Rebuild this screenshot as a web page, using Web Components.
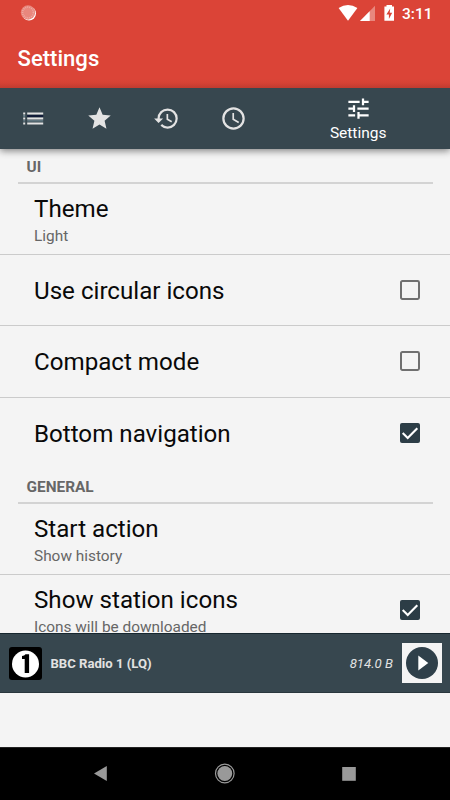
<!DOCTYPE html>
<html lang="en"><head><meta charset="utf-8"><title>Settings</title>
<style>html,body{margin:0;height:100%;background:#f4f4f4;font-family:Roboto,sans-serif}</style></head>
<body><radio-app></radio-app>
<script>
function define(name, markup, setup){
  const t=document.createElement('template');
  t.innerHTML=markup;
  customElements.define(name,class extends HTMLElement{
    constructor(){super();this.attachShadow({mode:'open'}).append(t.content.cloneNode(true));}
    connectedCallback(){if(setup)setup(this);}
  });
}
define('status-bar',`<style>:host{display:flex;height:27px;color:#fff;align-items:center;padding:0 17px 0 20px;box-sizing:border-box}
.sp{flex:1}svg{display:block;flex:none}span{font-size:15.5px;font-weight:500;line-height:27px;padding-top:1px;margin-left:8px;width:31px;white-space:nowrap}</style>
<svg width="17" height="27"><circle cx="9" cy="13.5" r="7" fill="#fff"/><circle cx="8" cy="12.5" r="7.2" fill="#e8877d"/><circle cx="8" cy="12.5" r="5.4" fill="none" stroke="#efaaa3" stroke-width="1.6" stroke-dasharray="1 1"/></svg>
<div class="sp"></div>
<svg width="57" height="27" viewBox="337 0 57 27"><path d="M338.6 8Q348 2 357.4 8L348 20.7Z" fill="#fff"/><path d="M375 5.8V21H360Z" fill="#e8877d"/><path d="M369.7 11.2V21H360Z" fill="#fff"/><path d="M386.5 5h5.5v1.6h2v14.2h-9.6V6.6h2.1Z" fill="#fff"/><path d="M390.2 8.5l-3.8 6h2.5v4.5l3.3-6.2h-2.5Z" fill="#db4437"/></svg><span>3:11</span>`);
define('app-header',`<style>:host{display:block;height:88px;background:linear-gradient(#db4437 79px,#d54235 83px,#bf3b30 88px)}
h1{margin:0;padding-left:17.5px;font:500 22.1px/62px Roboto,sans-serif;color:#fff}</style><status-bar></status-bar><h1><slot></slot></h1>`);
define('nav-tab',`<style>:host{display:flex;width:66.6px;flex-direction:column;align-items:center;justify-content:center;color:#fff;height:60px;box-sizing:border-box}
:host([active]){flex:1;width:auto;padding-top:2px}
::slotted(svg){display:block;width:27px;height:27px;fill:#e3e3e3}
:host([active]) ::slotted(svg){fill:#fff}
span{font-size:15.5px;line-height:20px;padding-top:1px}span:empty,:host(:not([active])) span{display:none}</style><slot></slot><span></span>`,
e=>e.shadowRoot.querySelector('span').textContent=e.getAttribute('label')||'');
define('nav-tabs',`<style>:host{display:flex;height:61px;background:#37474f;box-shadow:0 2px 7px #0007;position:relative;z-index:1;clip-path:inset(0 0 -14px 0)}</style><slot></slot>`);
define('pref-category',`<style>:host{display:block;height:35px;margin:0 17.5px;padding-left:9px;box-sizing:border-box;border-bottom:2px solid #d3d3d3;font-size:15.4px;font-weight:700;line-height:36px;color:#676767}</style><slot></slot>`);
define('check-box',`<style>:host{display:block;width:20px;height:20px}svg{display:block}.on{display:none}:host([checked]) .on{display:block}:host([checked]) .off{display:none}</style>
<svg class="off" width="20" height="20"><rect x="1" y="1" width="18" height="18" rx="1.4" fill="none" stroke="#707070" stroke-width="2"/></svg>
<svg class="on" width="20" height="20"><rect width="20" height="20" rx="2" fill="#2c3d46"/><path d="M2.7 10l5 5L17.3 5.2" fill="none" stroke="#fff" stroke-width="2.1"/></svg>`);
define('pref-row',`<style>:host{display:flex;height:71.2px;box-sizing:border-box;padding:0 29.6px 0 34px;align-items:center;justify-content:space-between;color:#090909}
:host([divider]){border-bottom:1px solid #cbcbcb}
:host(:not([divider])){padding-bottom:1px}
.text{padding-top:2px}
.t{font-size:24.15px;line-height:29px;white-space:nowrap;padding-top:1px}.s{font-size:15.4px;line-height:20px;padding-top:2px;color:#666;white-space:nowrap}</style>
<div class="text"><div class="t"><slot></slot></div><div class="s"><slot name="summary"></slot></div></div><slot name="control"></slot>`,
e=>{if(!e.querySelector('[slot=summary]'))e.shadowRoot.querySelector('.s').style.display='none'});
define('mini-player',`<style>:host{display:flex;height:60px;background:#37474f;box-sizing:border-box;border-top:1px solid #17272f;border-bottom:1px solid #29363d;align-items:center;padding:0 8.5px 0 9px;color:#e2e2e2}
svg{display:block;flex:none}.n{font-size:13.1px;font-weight:700;margin-left:8.5px;flex:1}.b{font-size:13.2px;font-style:italic;margin-right:8.5px}</style>
<svg width="33" height="33"><rect width="33" height="33" rx="3" fill="#000"/><circle cx="16.5" cy="17" r="13.5" fill="#fff"/><path d="M13 9q2.5 0 3.5-1.8h3.6V26H15.7V12H13Z" fill="#000"/></svg>
<div class="n">BBC Radio 1 (LQ)</div><div class="b">814.0 B</div>
<svg width="40" height="40"><rect width="40" height="40" fill="#f4f4f4"/><circle cx="20" cy="20" r="16" fill="#2f404a"/><path d="M16.3 12.6v14.8L26.3 20Z" fill="#fff"/></svg>`);
define('system-nav',`<style>:host{display:flex;height:53px;box-sizing:border-box;background:#000;border-top:1px solid #222}svg{display:block;width:450px}</style>
<svg viewBox="0 748 450 52" height="52"><g fill="#999"><path d="M94 773.5L106.8 766V781Z"/><circle cx="224.8" cy="773.5" r="7.4"/><circle cx="224.8" cy="773.5" r="9.3" fill="none" stroke="#999" stroke-width="1.2"/><rect x="342.2" y="767" width="13.6" height="13.8"/></g></svg>`);
define('radio-app',`<style>:host{display:flex;flex-direction:column;width:450px;height:800px;overflow:hidden;background:#f4f4f4}
app-header,nav-tabs,mini-player,system-nav{flex:none}main{height:484px;overflow:hidden;flex:none}.gap{flex:1}</style>
<app-header>Settings</app-header>
<nav-tabs>
<nav-tab><svg viewBox="0 0 27 27"><path d="M3.2 7.5h2v2h-2zM7.2 7.5h16v2h-16zM3.2 12.5h2v2h-2zM7.2 12.5h16v2h-16zM3.2 17.5h2v2h-2zM7.2 17.5h16v2h-16z"/><path fill="#101b38" d="M7.2 10h16v2h-16z"/><path fill="#6f8791" d="M3.2 10h2v1.8h-2zM3.2 15.2h2v1.4h-2zM7.2 15.2h16v1.4h-16z"/></svg></nav-tab>
<nav-tab><svg viewBox="0 0 24 24"><path d="M12 17.27 18.18 21l-1.64-7.03L22 9.24l-7.19-.61L12 2 9.19 8.63 2 9.24l5.46 4.73L5.82 21z"/></svg></nav-tab>
<nav-tab><svg viewBox="0 0 24 24"><path d="M13 3a9 9 0 0 0-9 9H1l3.89 3.89.07.14L9 12H6c0-3.87 3.13-7 7-7s7 3.13 7 7-3.13 7-7 7c-1.93 0-3.68-.79-4.94-2.06l-1.42 1.42A8.954 8.954 0 0 0 13 21a9 9 0 0 0 0-18zm-1 5v5l4.28 2.54.72-1.21-3.5-2.08V8H12z"/></svg></nav-tab>
<nav-tab><svg viewBox="0 0 24 24"><path d="M11.99 2C6.47 2 2 6.48 2 12s4.47 10 9.99 10C17.52 22 22 17.52 22 12S17.52 2 11.99 2zM12 20a8 8 0 1 1 0-16 8 8 0 0 1 0 16zm.5-13H11v6l5.25 3.15.75-1.23-4.5-2.67z"/></svg></nav-tab>
<nav-tab active label="Settings"><svg viewBox="0 0 24 24"><path d="M3 17v2h6v-2H3zM3 5v2h10V5H3zm10 16v-2h8v-2h-8v-2h-2v6h2zM7 9v2H3v2h4v2h2V9H7zm14 4v-2H11v2h10zm-6-4h2V7h4V5h-4V3h-2v6z"/></svg></nav-tab>
</nav-tabs>
<main>
<pref-category>UI</pref-category>
<pref-row divider>Theme<span slot="summary">Light</span></pref-row>
<pref-row divider>Use circular icons<check-box slot="control"></check-box></pref-row>
<pref-row divider>Compact mode<check-box slot="control"></check-box></pref-row>
<pref-row>Bottom navigation<check-box slot="control" checked></check-box></pref-row>
<pref-category>GENERAL</pref-category>
<pref-row divider>Start action<span slot="summary">Show history</span></pref-row>
<pref-row>Show station icons<span slot="summary">Icons will be downloaded</span><check-box slot="control" checked></check-box></pref-row>
</main><mini-player></mini-player><div class="gap"></div><system-nav></system-nav>`);
</script></body></html>
